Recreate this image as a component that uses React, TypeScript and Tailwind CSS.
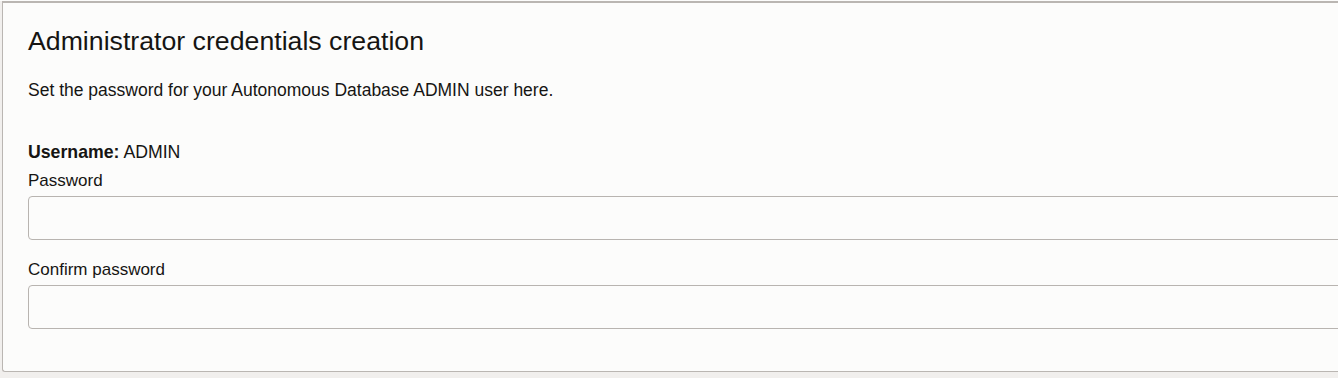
export default function App() {
  return (
    <div
      className="w-[1338px] h-[378px] overflow-hidden bg-[#f1efed] text-[#161513]"
      style={{ fontFamily: '"Liberation Sans", Arial, sans-serif' }}
    >
      <div className="h-[1px] bg-[#fcfcfb]" />
      <div className="ml-[2px] w-[1360px] bg-[#fcfcfb] border-t-2 border-l border-b border-[#bab6b2] rounded-bl-[3px] pl-[25px] pt-[23px] pb-[42px] flex flex-col">
        <h1 className="text-[26.7px] leading-[30px] font-normal">Administrator credentials creation</h1>
        <p className="mt-[24px] text-[17.5px] leading-[20px]">
          Set the password for your Autonomous Database ADMIN user here.
        </p>
        <div className="mt-[42px] text-[17.7px] leading-[20px]">
          <span className="font-bold">Username:</span> ADMIN
        </div>
        <label className="mt-[9px] text-[17px] leading-[20px]">Password</label>
        <div className="mt-[5px] h-[44px] w-[1320px] border border-[#b8b4b0] rounded-[4px] bg-[#fcfcfb]" />
        <label className="mt-[20px] text-[17px] leading-[20px]">Confirm password</label>
        <div className="mt-[5px] h-[44px] w-[1320px] border border-[#b8b4b0] rounded-[4px] bg-[#fcfcfb]" />
      </div>
    </div>
  );
}
